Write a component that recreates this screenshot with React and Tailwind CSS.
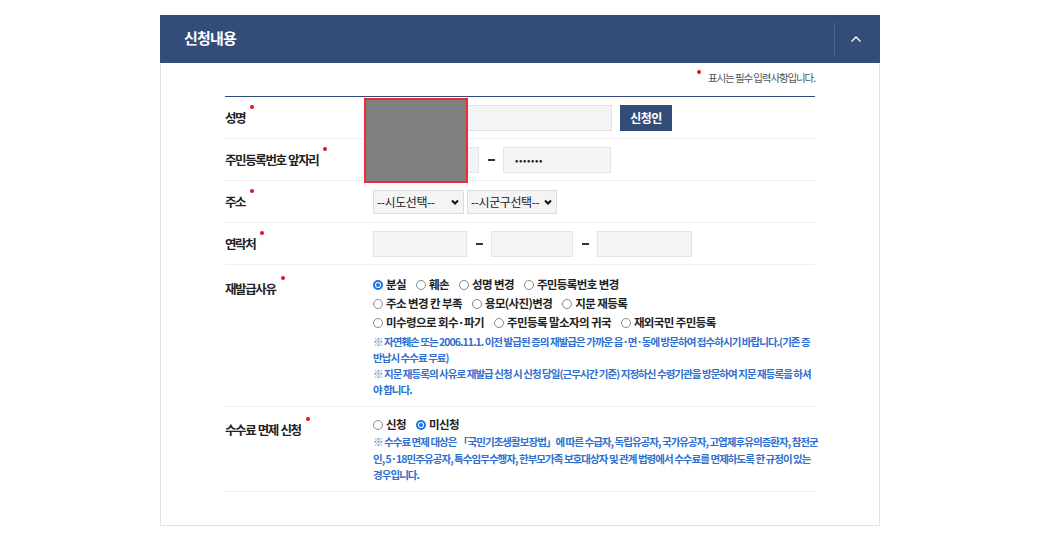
import React from "react";

const Dot = () => (
  <span className="absolute -right-[9px] -top-[4px] w-[4px] h-[4px] rounded-full bg-[#e8101c]" />
);

function Label({ children, top }) {
  return (
    <div className={top ? "w-[148px] shrink-0 " + top : "w-[148px] shrink-0 -mt-[3px]"}>
      <span className="relative inline-block text-[12.5px] leading-[18px] font-bold text-[#222] tracking-[-1.4px] [word-spacing:1px]">
        {children}
        <Dot />
      </span>
    </div>
  );
}

const Box = ({ w }) => (
  <div className="h-[26px] bg-[#f4f4f4] border border-[#e3e3e3]" style={{ width: w }} />
);

const Dash = () => <span className="mx-[8.5px] w-[7px] h-[2px] bg-[#333]" />;

function Radio({ label, checked, last }) {
  return (
    <span className={last ? "flex items-center" : "flex items-center mr-[10px]"}>
      {checked ? (
        <span className="w-[10px] h-[10px] rounded-full bg-[#1a73e8] flex items-center justify-center">
          <span className="w-[6px] h-[6px] rounded-full bg-white flex items-center justify-center">
            <span className="w-[4px] h-[4px] rounded-full bg-[#1a73e8]" />
          </span>
        </span>
      ) : (
        <span className="w-[10px] h-[10px] rounded-full border border-[#8a8a8a] bg-white" />
      )}
      <span className="ml-[3px] text-[11.5px] font-bold text-[#222] tracking-[-0.6px]">{label}</span>
    </span>
  );
}

function Select({ text, w, className }) {
  return (
    <div
      className={"h-[24px] border border-[#dcdcdc] bg-[#f4f4f4] flex items-center justify-between pl-[3px] pr-[4px] " + className}
      style={{ width: w }}
    >
      <span className="text-[12px] text-[#222] tracking-[-0.4px]">{text}</span>
      <svg width="8" height="6" viewBox="0 0 8 6">
        <polyline points="1,1.5 4,4.5 7,1.5" fill="none" stroke="#111" strokeWidth="2" />
      </svg>
    </div>
  );
}

export default function App() {
  return (
    <div className="relative min-h-[541px] bg-white pt-[15px] font-['Noto_Sans_CJK_KR','Noto_Sans',sans-serif]">
      <div className="ml-[160px] w-[720px]">
        <div className="h-[48px] bg-[#344d78] flex items-center justify-between pl-[24px]">
          <h2 className="text-[15px] font-bold text-white tracking-[-0.8px] -mt-[1px]">신청내용</h2>
          <div className="h-[34px] w-[46px] border-l border-[#4b6390] flex items-center justify-center pr-[3px]">
            <svg width="12" height="8" viewBox="0 0 12 8">
              <polyline points="1.5,6.5 6,2 10.5,6.5" fill="none" stroke="#fff" strokeWidth="1.4" />
            </svg>
          </div>
        </div>
        <div className="border-x border-b border-[#e1e1e1] px-[64px] pb-[33px]">
          <div className="h-[33px] flex justify-end pt-[8px]">
            <span className="relative text-[10.5px] leading-[14px] text-[#555] tracking-[-1.1px]">
              <span className="absolute -left-[11px] -top-[1px] w-[4px] h-[4px] rounded-full bg-[#e8101c]" />
              표시는 필수 입력사항입니다.
            </span>
          </div>
          <div className="border-t border-[#344d78]">
            <div className="flex items-center h-[42px] border-b border-[#eeeeee]">
              <Label>성명</Label>
              <Box w={239} />
              <div className="ml-[8px] w-[52px] h-[26px] bg-[#344d78] text-white text-[12px] font-bold tracking-[-0.5px] flex items-center justify-center">
                신청인
              </div>
            </div>
            <div className="flex items-center h-[42px] border-b border-[#eeeeee]">
              <Label>주민등록번호 앞자리</Label>
              <Box w={106} />
              <Dash />
              <div className="w-[108px] h-[26px] bg-[#f4f4f4] border border-[#e3e3e3] flex items-center pl-[11px] text-[10px] text-[#222] tracking-[0.6px]">
                •••••••
              </div>
            </div>
            <div className="flex items-center h-[42px] border-b border-[#eeeeee]">
              <Label>주소</Label>
              <Select text="--시도선택--" w={91} className="" />
              <Select text="--시군구선택--" w={90} className="ml-[3px]" />
            </div>
            <div className="flex items-center h-[42px] border-b border-[#eeeeee]">
              <Label>연락처</Label>
              <Box w={94} />
              <Dash />
              <Box w={82} />
              <Dash />
              <Box w={95} />
            </div>
            <div className="flex border-b border-[#eeeeee] h-[142px]">
              <Label top="pt-[10px]">재발급사유</Label>
              <div className="pt-[10px]">
                <div className="flex items-center h-[19px]">
                  <Radio label="분실" checked />
                  <Radio label="훼손" />
                  <Radio label="성명 변경" />
                  <Radio label="주민등록번호 변경" last />
                </div>
                <div className="flex items-center h-[19px]">
                  <Radio label="주소 변경 칸 부족" />
                  <Radio label="용모(사진)변경" />
                  <Radio label="지문 재등록" last />
                </div>
                <div className="flex items-center h-[19px]">
                  <Radio label="미수령으로 회수·파기" />
                  <Radio label="주민등록 말소자의 귀국" />
                  <Radio label="재외국민 주민등록" last />
                </div>
                <div className="mt-[2px] text-[10.5px] leading-[16px] font-bold text-[#2f6fcf] tracking-[-0.95px] whitespace-nowrap">
                  <div>※ 자연훼손 또는 2006.11.1. 이전 발급된 증의 재발급은 가까운 읍·면·동에 방문하여 접수하시기 바랍니다.(기존 증</div>
                  <div>반납시 수수료 무료)</div>
                  <div>※ 지문 재등록의 사유로 재발급 신청 시 신청 당일(근무시간 기준) 지정하신 수령기관을 방문하여 지문 재등록을 하셔</div>
                  <div>야 합니다.</div>
                </div>
              </div>
            </div>
            <div className="flex border-b border-[#eeeeee] h-[85px]">
              <Label top="pt-[9px]">수수료 면제 신청</Label>
              <div className="pt-[8px]">
                <div className="flex items-center h-[19px]">
                  <Radio label="신청" />
                  <Radio label="미신청" checked last />
                </div>
                <div className="text-[10.5px] leading-[16.5px] font-bold text-[#2f6fcf] tracking-[-0.95px] whitespace-nowrap">
                  <div>※ 수수료 면제 대상은 「국민기초생활보장법」에 따른 수급자, 독립유공자, 국가유공자, 고엽제후유의증환자, 참전군</div>
                  <div>인, 5·18민주유공자, 특수임무수행자, 한부모가족 보호대상자 및 관계 법령에서 수수료를 면제하도록 한 규정이 있는</div>
                  <div>경우입니다.</div>
                </div>
              </div>
            </div>
          </div>
        </div>
      </div>
      <div className="absolute left-[364px] top-[98px] w-[104px] h-[85px] bg-[#808080] border-2 border-[#ee2a35]" />
    </div>
  );
}
